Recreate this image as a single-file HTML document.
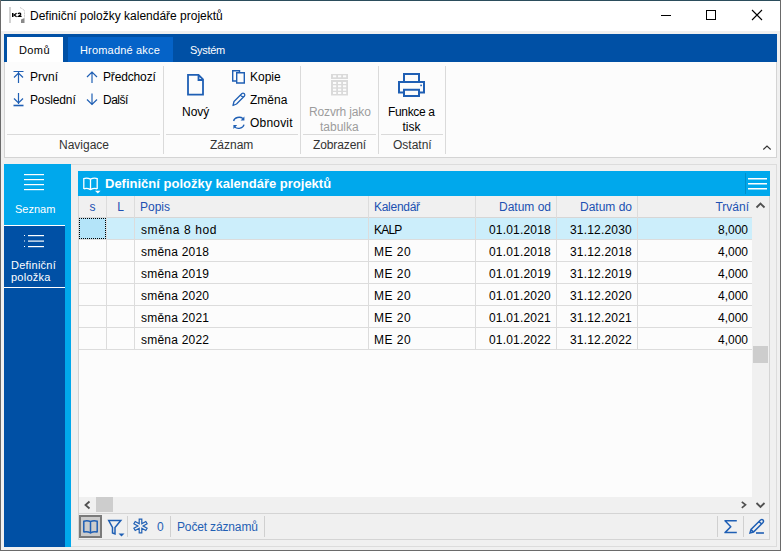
<!DOCTYPE html>
<html><head><meta charset="utf-8">
<style>
*{margin:0;padding:0;box-sizing:border-box}
html,body{width:781px;height:551px;overflow:hidden;background:#f0f0f0;font-family:"Liberation Sans",sans-serif;font-size:12px;color:#000}
.a{position:absolute}
.t{position:absolute;white-space:nowrap;line-height:14px}
svg{position:absolute;overflow:visible}
</style></head><body>
<!-- window borders -->
<div class="a" style="left:0;top:0;width:781px;height:551px;background:#f0f0f0"></div>
<!-- title bar -->
<div class="a" style="left:0;top:0;width:781px;height:31px;background:#fff"></div>
<div class="a" style="left:0;top:0;width:781px;height:1px;background:#2b4d5c"></div>
<div class="a" style="left:0;top:0;width:1px;height:551px;background:#6a6a6a"></div>
<div class="a" style="left:780px;top:0;width:1px;height:551px;background:#6a6a6a"></div>
<div class="a" style="left:0;top:550px;width:781px;height:1px;background:#6a6a6a"></div>
<div class="t" style="left:30px;top:9px">Definiční položky kalendáře projektů</div>

<!-- window controls -->
<div class="a" style="left:661px;top:15px;width:10px;height:1px;background:#000"></div>
<div class="a" style="left:706px;top:10px;width:10px;height:10px;border:1px solid #000"></div>
<svg style="left:751px;top:9px" width="12" height="12"><path d="M1 1L11 11M11 1L1 11" stroke="#000" stroke-width="1.1"/></svg>

<!-- ribbon tab bar -->
<div class="a" style="left:4px;top:34px;width:773px;height:28px;background:#0050a5"></div>
<div class="a" style="left:7px;top:37px;width:56px;height:25px;background:#fff"></div>
<div class="a" style="left:68px;top:37px;width:105px;height:25px;background:#0563c8"></div>
<div class="t" style="left:19px;top:43px;color:#000;font-size:11px;letter-spacing:0.4px">Domů</div>
<div class="t" style="left:80px;top:43px;color:#fff;font-size:11px;letter-spacing:0.18px">Hromadné akce</div>
<div class="t" style="left:190px;top:43px;color:#fff;font-size:11px;letter-spacing:-0.3px">Systém</div>

<!-- ribbon body -->
<div class="a" style="left:4px;top:62px;width:773px;height:96px;background:#fcfcfc;border:1px solid #d4d4d4;border-top:0"></div>


<!-- ribbon groups -->
<div class="a" style="left:7px;top:134px;width:153px;height:1px;background:#dadada"></div>
<div class="a" style="left:163px;top:66px;width:1px;height:88px;background:#dadada"></div>
<div class="a" style="left:166px;top:134px;width:132px;height:1px;background:#dadada"></div>
<div class="a" style="left:300px;top:66px;width:1px;height:88px;background:#dadada"></div>
<div class="a" style="left:303px;top:134px;width:73px;height:1px;background:#dadada"></div>
<div class="a" style="left:378px;top:66px;width:1px;height:88px;background:#dadada"></div>
<div class="a" style="left:381px;top:134px;width:62px;height:1px;background:#dadada"></div>
<div class="a" style="left:445px;top:66px;width:1px;height:88px;background:#dadada"></div>

<div class="t" style="left:30px;top:70px">První</div>
<div class="t" style="left:30px;top:93px;letter-spacing:-0.14px">Poslední</div>
<div class="t" style="left:103px;top:70px;letter-spacing:-0.15px">Předchozí</div>
<div class="t" style="left:103px;top:93px;letter-spacing:-0.5px">Další</div>
<div class="t" style="left:59px;top:138px;color:#333">Navigace</div>

<svg style="left:0;top:0" width="781" height="160">
 <g fill="none" stroke="#1f5fb4" stroke-width="1.2">
  <path d="M13.5 71.5H23.5M18.5 72V83M14 77.5L18.5 73L23 77.5"/>
  <path d="M18.5 93V104M14 98.5L18.5 103L23 98.5"/>
  <path d="M13.5 105.5H23.5" stroke-width="1.6"/>
  <path d="M92 71.5V83M87 77L92 72L97 77"/>
  <path d="M92 93.5V105M87 99.5L92 104.5L97 99.5"/>
 </g>
 <!-- Novy doc -->
 <path d="M188 74.8H198.5L203 79.3V94.7H188Z M198.5 75V80H203" fill="none" stroke="#1f5fb4" stroke-width="1.8" stroke-linejoin="miter"/>
 <!-- Kopie -->
 <path d="M232.7 70.7H239.5V81H232.7Z" fill="none" stroke="#1f5fb4" stroke-width="1.4"/>
 <path d="M236.7 72.7H244.3V83H236.7Z" fill="#fcfcfc" stroke="#1f5fb4" stroke-width="1.4"/>
 <!-- Zmena pencil -->
 <path d="M233 105.5L234 101.5L242 93.5Q243 92.8 244 93.5L244.5 94Q245.2 95 244.5 96L236.5 104Z M240.5 95L243 97.5" fill="none" stroke="#1f5fb4" stroke-width="1.3" stroke-linejoin="round"/>
 <!-- Obnovit -->
 <path d="M233.6 121A5.6 4.6 0 0 1 243 118.6M244 124.6A5.6 4.6 0 0 1 234.6 127" fill="none" stroke="#1f5fb4" stroke-width="1.3"/>
 <path d="M244.4 116.6V120.6H240.6Z M233.4 129V125H237.2Z" fill="#1f5fb4"/>
 <!-- Rozvrh grid -->
 <g fill="#dadada"><rect x="331" y="74" width="17" height="5"/><rect x="331" y="80" width="17" height="15.5"/></g>
 <g fill="#fcfcfc"><rect x="333" y="75.3" width="3.2" height="2"/><rect x="333" y="82" width="3.2" height="2"/><rect x="333" y="85.3" width="3.2" height="2"/><rect x="333" y="88.7" width="3.2" height="2"/><rect x="333" y="92" width="3.2" height="2"/><rect x="338" y="75.3" width="3.2" height="2"/><rect x="338" y="82" width="3.2" height="2"/><rect x="338" y="85.3" width="3.2" height="2"/><rect x="338" y="88.7" width="3.2" height="2"/><rect x="338" y="92" width="3.2" height="2"/><rect x="343" y="75.3" width="3.2" height="2"/><rect x="343" y="82" width="3.2" height="2"/><rect x="343" y="85.3" width="3.2" height="2"/><rect x="343" y="88.7" width="3.2" height="2"/><rect x="343" y="92" width="3.2" height="2"/></g>
 <!-- printer -->
 <g fill="none" stroke="#1f5fb4" stroke-width="2">
  <path d="M404 81V74H419V81"/>
  <path d="M403 92.5H399V82H424V92.5H420"/>
  <path d="M404 89.8H419V96H404Z"/>
 </g>
 <rect x="420.3" y="84.6" width="1.6" height="1.6" fill="#1f5fb4"/>
</svg>

<div class="t" style="left:182px;top:105px">Nový</div>
<div class="t" style="left:250px;top:70px">Kopie</div>
<div class="t" style="left:250px;top:93px">Změna</div>
<div class="t" style="left:250px;top:116px;letter-spacing:0.2px">Obnovit</div>
<div class="t" style="left:210px;top:138px;color:#333">Záznam</div>
<div class="t" style="left:309px;top:105px;color:#9c9c9c;letter-spacing:-0.15px">Rozvrh jako</div>
<div class="t" style="left:320px;top:120px;color:#9c9c9c">tabulka</div>
<div class="t" style="left:313px;top:138px;color:#333;letter-spacing:-0.12px">Zobrazení</div>
<div class="t" style="left:388px;top:105px;letter-spacing:-0.35px">Funkce a</div>
<div class="t" style="left:402.5px;top:120px">tisk</div>
<div class="t" style="left:393px;top:138px;color:#333">Ostatní</div>
<svg style="left:762px;top:144px" width="12" height="8"><path d="M1.3 5.5L5 2L8.7 5.5" fill="none" stroke="#333" stroke-width="1.1"/></svg>

<!-- sidebar -->
<div class="a" style="left:4px;top:164px;width:67px;height:383px;background:#00a8ec"></div>
<div class="a" style="left:4px;top:225px;width:61px;height:322px;background:#0050a5"></div>
<div class="a" style="left:4px;top:225px;width:61px;height:1px;background:#fff"></div>
<div class="a" style="left:4px;top:287px;width:61px;height:1px;background:#fff"></div>
<svg style="left:0;top:160px" width="80" height="100">
 <g fill="#fff">
  <rect x="24" y="14" width="20" height="1.2"/>
  <rect x="24" y="19" width="20" height="1.2"/>
  <rect x="24" y="24" width="20" height="1.2"/>
  <rect x="24" y="29" width="20" height="1.2"/>
  <rect x="24" y="75" width="1" height="1"/><rect x="28" y="75" width="16" height="1.2"/>
  <rect x="24" y="80.5" width="1" height="1"/><rect x="28" y="80.5" width="16" height="1.2"/>
  <rect x="24" y="86" width="1" height="1"/><rect x="28" y="86" width="16" height="1.2"/>
 </g>
</svg>
<div class="t" style="left:15px;top:202px;color:#fff;font-size:11px">Seznam</div>
<div class="t" style="left:11px;top:258px;color:#fff;font-size:11px;letter-spacing:0.25px">Definiční</div>
<div class="t" style="left:11px;top:270px;color:#fff;font-size:11px;letter-spacing:0.25px">položka</div>

<!-- content panel -->
<div class="a" style="left:71px;top:164px;width:706px;height:383px;border:1px solid #dcdcdc;border-left:0;background:#f0f0f0"></div>
<div class="a" style="left:78px;top:171px;width:692px;height:369px;background:#fcfcfc;border:1px solid #d4d4d4"></div>
<div class="a" style="left:78px;top:171px;width:692px;height:25px;background:#00a8ec"></div>
<div class="a" style="left:745px;top:173px;width:1px;height:21px;background:#0090cc"></div>
<svg style="left:748px;top:177px" width="20" height="14"><g fill="#fff"><rect x="0" y="1" width="19" height="1.5"/><rect x="0" y="6" width="19" height="1.5"/><rect x="0" y="11" width="19" height="1.5"/></g></svg>
<div class="t" style="left:105px;top:177px;color:#fff;font-weight:bold;font-size:13px">Definiční položky kalendáře projektů</div>
<svg style="left:82px;top:176px" width="20" height="18"><path d="M1.8 13V2.6Q5 1.6 8.5 3.2V14 M8.5 3.2Q12 1.6 15.2 2.6V13 M1.8 12.8Q5 11.8 8.5 13.6Q12 11.8 15.2 12.8" fill="none" stroke="#fff" stroke-width="1.3"/><path d="M13 14.8H18.6L15.8 17.4Z" fill="#fff"/></svg>

<!-- grid header -->
<div class="a" style="left:79px;top:196px;width:673px;height:22px;background:#f0f0f0;border-bottom:1px solid #d6d6d6"></div>

<!-- grid -->
<div class="t" style="left:79px;width:27px;text-align:center;top:200px;color:#2150b2">s</div>
<div class="t" style="left:107px;width:27px;text-align:center;top:200px;color:#2150b2">L</div>
<div class="t" style="left:140px;top:200px;color:#2150b2">Popis</div>
<div class="t" style="left:374px;top:200px;color:#2150b2;letter-spacing:-0.28px">Kalendář</div>
<div class="t" style="right:230px;top:200px;color:#2150b2">Datum od</div>
<div class="t" style="right:149px;top:200px;color:#2150b2">Datum do</div>
<div class="t" style="right:32px;top:200px;color:#2150b2">Trvání</div>
<div class="a" style="left:79px;top:218px;width:673px;height:21px;background:#cceefb"></div>
<div class="a" style="left:79px;top:218px;width:27px;height:21px;background:#b4e4f9"></div>
<div class="a" style="left:79px;top:218px;width:27px;height:21px;border:1px dotted #000"></div>
<div class="a" style="left:79px;top:239px;width:673px;height:1px;background:#dcdcdc"></div>
<div class="a" style="left:79px;top:261px;width:673px;height:1px;background:#dcdcdc"></div>
<div class="a" style="left:79px;top:283px;width:673px;height:1px;background:#dcdcdc"></div>
<div class="a" style="left:79px;top:305px;width:673px;height:1px;background:#dcdcdc"></div>
<div class="a" style="left:79px;top:327px;width:673px;height:1px;background:#dcdcdc"></div>
<div class="a" style="left:79px;top:349px;width:673px;height:1px;background:#dcdcdc"></div>
<div class="a" style="left:106px;top:196px;width:1px;height:154px;background:#dcdcdc"></div>
<div class="a" style="left:134px;top:196px;width:1px;height:154px;background:#dcdcdc"></div>
<div class="a" style="left:368px;top:196px;width:1px;height:154px;background:#dcdcdc"></div>
<div class="a" style="left:475px;top:196px;width:1px;height:154px;background:#dcdcdc"></div>
<div class="a" style="left:556px;top:196px;width:1px;height:154px;background:#dcdcdc"></div>
<div class="a" style="left:637px;top:196px;width:1px;height:154px;background:#dcdcdc"></div>
<div class="t" style="left:141px;top:223px;letter-spacing:0.6px">směna 8 hod</div>
<div class="t" style="left:374px;top:223px;letter-spacing:-0.8px">KALP</div>
<div class="t" style="right:230px;top:223px;letter-spacing:0.2px">01.01.2018</div>
<div class="t" style="right:149px;top:223px;letter-spacing:0.2px">31.12.2030</div>
<div class="t" style="right:33px;top:223px">8,000</div>
<div class="t" style="left:141px;top:245px;letter-spacing:0.22px">směna 2018</div>
<div class="t" style="left:374px;top:245px;letter-spacing:0.5px">ME 20</div>
<div class="t" style="right:230px;top:245px;letter-spacing:0.2px">01.01.2018</div>
<div class="t" style="right:149px;top:245px;letter-spacing:0.2px">31.12.2018</div>
<div class="t" style="right:33px;top:245px">4,000</div>
<div class="t" style="left:141px;top:267px;letter-spacing:0.22px">směna 2019</div>
<div class="t" style="left:374px;top:267px;letter-spacing:0.5px">ME 20</div>
<div class="t" style="right:230px;top:267px;letter-spacing:0.2px">01.01.2019</div>
<div class="t" style="right:149px;top:267px;letter-spacing:0.2px">31.12.2019</div>
<div class="t" style="right:33px;top:267px">4,000</div>
<div class="t" style="left:141px;top:289px;letter-spacing:0.22px">směna 2020</div>
<div class="t" style="left:374px;top:289px;letter-spacing:0.5px">ME 20</div>
<div class="t" style="right:230px;top:289px;letter-spacing:0.2px">01.01.2020</div>
<div class="t" style="right:149px;top:289px;letter-spacing:0.2px">31.12.2020</div>
<div class="t" style="right:33px;top:289px">4,000</div>
<div class="t" style="left:141px;top:311px;letter-spacing:0.22px">směna 2021</div>
<div class="t" style="left:374px;top:311px;letter-spacing:0.5px">ME 20</div>
<div class="t" style="right:230px;top:311px;letter-spacing:0.2px">01.01.2021</div>
<div class="t" style="right:149px;top:311px;letter-spacing:0.2px">31.12.2021</div>
<div class="t" style="right:33px;top:311px">4,000</div>
<div class="t" style="left:141px;top:333px;letter-spacing:0.22px">směna 2022</div>
<div class="t" style="left:374px;top:333px;letter-spacing:0.5px">ME 20</div>
<div class="t" style="right:230px;top:333px;letter-spacing:0.2px">01.01.2022</div>
<div class="t" style="right:149px;top:333px;letter-spacing:0.2px">31.12.2022</div>
<div class="t" style="right:33px;top:333px">4,000</div>
<div class="a" style="left:752px;top:196px;width:17px;height:301px;background:#f0f0f0"></div>
<div class="a" style="left:753px;top:346px;width:15px;height:17px;background:#cdcdcd"></div>
<svg style="left:754px;top:200px" width="14" height="10"><path d="M2.5 7.5L6.5 3.5L10.5 7.5" fill="none" stroke="#505050" stroke-width="1.8"/></svg>
<div class="a" style="left:79px;top:497px;width:690px;height:17px;background:#f0f0f0"></div>
<div class="a" style="left:96px;top:497px;width:17px;height:15px;background:#cdcdcd"></div>
<svg style="left:82px;top:499px" width="12" height="12"><path d="M7.5 2.5L3.5 6L7.5 9.5" fill="none" stroke="#505050" stroke-width="1.8"/></svg>
<svg style="left:738px;top:499px" width="12" height="12"><path d="M3.8 2.8L7.5 5.8L3.8 8.8" fill="none" stroke="#505050" stroke-width="1.7"/></svg>
<svg style="left:754px;top:499px" width="14" height="12"><path d="M2.5 4L6.5 8L10.5 4" fill="none" stroke="#505050" stroke-width="1.8"/></svg>
<div class="a" style="left:79px;top:513px;width:690px;height:1px;background:#d4d4d4"></div>
<!-- bottom toolbar -->
<div class="a" style="left:79px;top:514px;width:690px;height:25px;background:#f0f0f0"></div>
<div class="a" style="left:79px;top:515px;width:23px;height:23px;background:#cccccc;border:2px solid #7a7a7a"></div>
<div class="a" style="left:127px;top:516px;width:1px;height:21px;background:#d0d0d0"></div>
<div class="a" style="left:170px;top:516px;width:1px;height:21px;background:#d0d0d0"></div>
<div class="a" style="left:264px;top:516px;width:1px;height:21px;background:#d0d0d0"></div>
<div class="a" style="left:717px;top:516px;width:1px;height:21px;background:#d0d0d0"></div>
<div class="a" style="left:743px;top:516px;width:1px;height:21px;background:#d0d0d0"></div>
<div class="t" style="left:157px;top:520px;color:#1f5fb4">0</div>
<div class="t" style="left:177px;top:520px;color:#1f5fb4;letter-spacing:-0.15px">Počet záznamů</div>

<!-- toolbar icons -->
<svg style="left:0;top:0" width="781" height="551">
 <g fill="none" stroke="#1f5fb4" stroke-width="1.5">
  <path d="M83.8 532.5V521.3Q87 520.3 90.5 521.5V533 M90.5 521.5Q94 520.3 97.2 521.3V532.5 M83.8 532Q87.5 531 90.5 533Q93.5 531 97.2 532"/>
  <path d="M108.7 520.5H120.8L115 527.5V534L112.5 533V527.5Z" stroke-linejoin="miter"/>
  <path d="M736.8 520.8H725L730.8 526.7L725 532.6H736.8" stroke-linejoin="round"/>
  <path d="M750 533L751 529.5L760.5 520Q762 519 763 520Q764 521.2 763 522.5L753.5 532Z M751 529.5L753.5 532 M759 521.5L761.8 524.2"/>
  <path d="M756 533H764" stroke-width="1.6"/>
 </g>
 <path d="M118.5 533.5H124.5L121.5 536.5Z" fill="#1f5fb4"/>
 <path d="M139.2 519.2H141.8V523.8L145.8 521.5L147.1 523.7L143.1 526.0L147.1 528.3L145.8 530.5L141.8 528.2V532.8H139.2V528.2L135.2 530.5L133.9 528.3L137.9 526.0L133.9 523.7L135.2 521.5L139.2 523.8Z" fill="none" stroke="#1f5fb4" stroke-width="1.2" stroke-linejoin="miter"/>
 <!-- K2 icon -->
 <rect x="9" y="7" width="2" height="16" fill="#d2d2d2"/>
 <rect x="12" y="13" width="1.5" height="4" fill="#000"/>
 <path d="M16.6 13.3L14.2 15L16.6 16.7" fill="none" stroke="#000" stroke-width="1.3"/>
 <path d="M17.9 13.9Q18.6 13.1 19.7 13.2Q21.2 13.5 20.5 14.8L18.6 16.3H21.6" fill="none" stroke="#000" stroke-width="1.25"/>
 <path d="M20 7.5L23.5 9.5L24.5 11V18" fill="none" stroke="#b0b0b0" stroke-width="0.8" stroke-dasharray="1 0.6"/>
 <path d="M21 23V19.5L24.5 18V23Z" fill="#8a8a8a"/>
</svg>
</body></html>
